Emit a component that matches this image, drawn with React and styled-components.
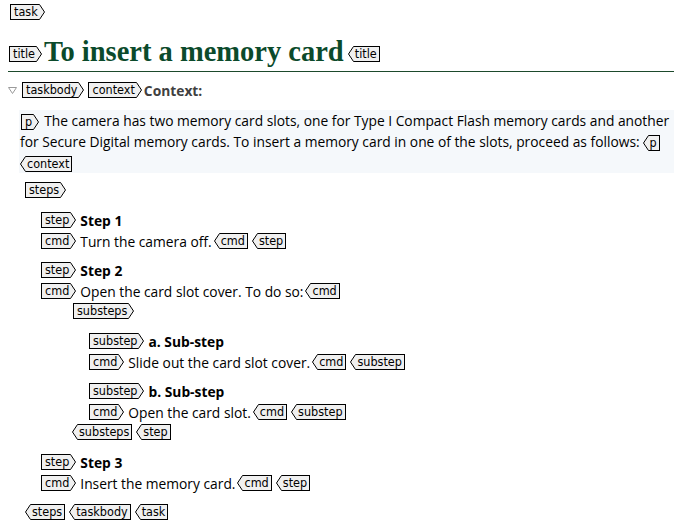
import React from "react";
import styled, { createGlobalStyle } from "styled-components";

const GlobalStyle = createGlobalStyle`
  html, body { margin: 0; padding: 0; background: #ffffff; }
  body { font-family: "Open Sans", "Noto Sans", sans-serif; color: #000; }
`;

const TAG_BG = "#f0f0f0";
const BODY_SIZE = "13.8px";

const TagWrap = styled.span`
  display: inline-flex;
  align-items: stretch;
  height: 16px;
  vertical-align: middle;
  flex: none;
  margin: ${(p) => p.$m || "0"};
`;

const TagLabel = styled.span`
  display: inline-block;
  box-sizing: border-box;
  height: 16px;
  background: ${TAG_BG};
  border: 1px solid #000;
  ${(p) => (p.$end ? "border-left: none;" : "border-right: none;")}
  padding: ${(p) => (p.$end ? "0 2px 0 1px" : "0 1px 0 3px")};
  font-family: "DejaVu Sans Condensed", "DejaVu Sans", sans-serif;
  font-stretch: condensed;
  font-size: 12.5px;
  line-height: 14px;
  color: #000;
  white-space: nowrap;
`;

const Arrow = ({ left }) => (
  <svg width="6" height="16" viewBox="0 0 6 16" style={{ display: "block" }}>
    {left ? (
      <path d="M6 0.5 H5.5 L0.5 8 L5.5 15.5 H6" fill={TAG_BG} stroke="#000" strokeWidth="1" />
    ) : (
      <path d="M0 0.5 H0.5 L5.5 8 L0.5 15.5 H0" fill={TAG_BG} stroke="#000" strokeWidth="1" />
    )}
  </svg>
);

const Tag = ({ end, children, m }) => (
  <TagWrap $m={m}>
    {end && <Arrow left />}
    <TagLabel $end={end}>{children}</TagLabel>
    {!end && <Arrow />}
  </TagWrap>
);

const Page = styled.div`
  padding: 2px 0 8px 8px;
`;

const Row = styled.div`
  display: flex;
  align-items: center;
  height: 20px;
  gap: ${(p) => p.$gap || "4px"};
  padding-left: ${(p) => p.$indent || "0"};
  margin-top: ${(p) => p.$mt || "0"};
  font-size: ${BODY_SIZE};
  white-space: nowrap;
`;

const TitleBlock = styled.div`
  display: flex;
  align-items: flex-end;
  gap: 2px;
  margin-top: 14px;
  padding-left: 1px;
  padding-bottom: 3px;
  border-bottom: 1px solid #1d4a2c;
`;

const TitleText = styled.h1`
  margin: 0;
  font-family: "Liberation Serif", "Times New Roman", serif;
  font-weight: 700;
  font-size: 28.5px;
  line-height: 32px;
  color: #0b4a2b;
`;

const TitleTagSlot = styled.span`
  display: inline-flex;
  margin-bottom: 6px;
  margin-left: ${(p) => p.$ml || "0"};
`;

const Toggle = styled.svg`
  display: block;
  flex: none;
`;

const ContextLabel = styled.span`
  font-weight: 700;
  font-size: ${BODY_SIZE};
  color: #404040;
  margin-left: -2px;
`;

const ContextBlock = styled.div`
  margin: 10px 0 0 11px;
  padding-left: 1px;
  background: #f5f8fb;
  font-size: ${BODY_SIZE};
  line-height: 21px;
`;

const Para = styled.p`
  margin: 0;
`;

const Block = styled.div`
  margin-top: ${(p) => p.$mt || "9px"};
  padding-left: ${(p) => p.$indent || "0"};
`;

const Heading = styled.span`
  font-weight: 700;
  font-size: ${BODY_SIZE};
`;

const Text = styled.span`
  font-size: ${BODY_SIZE};
  margin-right: -2px;
`;

export default function App() {
  return (
    <>
      <GlobalStyle />
      <Page>
        <Row $indent="2px">
          <Tag>task</Tag>
        </Row>

        <TitleBlock>
          <TitleTagSlot>
            <Tag>title</Tag>
          </TitleTagSlot>
          <TitleText>To insert a memory card</TitleText>
          <TitleTagSlot $ml="2px">
            <Tag end>title</Tag>
          </TitleTagSlot>
        </TitleBlock>

        <Row $mt="8px" $gap="4px">
          <Toggle width="9" height="7" viewBox="0 0 9 7">
            <path d="M0.5 0.5 H8.5 L4.5 6.5 Z" fill="none" stroke="#9a9a9a" strokeWidth="1" />
          </Toggle>
          <Tag m="0 0 0 1px">taskbody</Tag>
          <Tag>context</Tag>
          <ContextLabel>Context:</ContextLabel>
        </Row>

        <ContextBlock>
          <Para>
            <Tag m="0 5px 0 1px">p</Tag>
            The camera has two memory card slots, one for Type I Compact Flash memory cards and another for
            Secure Digital memory cards. To insert a memory card in one of the slots, proceed as follows:
            <Tag end m="0 0 0 3px">p</Tag>
          </Para>
          <Tag end>context</Tag>
        </ContextBlock>

        <Row $mt="7px" $indent="17px">
          <Tag>steps</Tag>
        </Row>

        <Block $indent="33px" $mt="0">
          <Block $mt="10px">
            <Row>
              <Tag>step</Tag>
              <Heading>Step 1</Heading>
            </Row>
            <Row $mt="1px">
              <Tag>cmd</Tag>
              <Text>Turn the camera off.</Text>
              <Tag end>cmd</Tag>
              <Tag end>step</Tag>
            </Row>
          </Block>

          <Block>
            <Row>
              <Tag>step</Tag>
              <Heading>Step 2</Heading>
            </Row>
            <Row $mt="1px">
              <Tag>cmd</Tag>
              <Text>Open the card slot cover. To do so:</Text>
              <Tag end>cmd</Tag>
            </Row>
            <Row $indent="32px">
              <Tag>substeps</Tag>
            </Row>
            <Block $indent="48px" $mt="10px">
              <Row>
                <Tag>substep</Tag>
                <Heading>a. Sub-step</Heading>
              </Row>
              <Row $mt="1px">
                <Tag>cmd</Tag>
                <Text>Slide out the card slot cover.</Text>
                <Tag end>cmd</Tag>
                <Tag end>substep</Tag>
              </Row>
            </Block>
            <Block $indent="48px">
              <Row>
                <Tag>substep</Tag>
                <Heading>b. Sub-step</Heading>
              </Row>
              <Row $mt="1px">
                <Tag>cmd</Tag>
                <Text>Open the card slot.</Text>
                <Tag end>cmd</Tag>
                <Tag end>substep</Tag>
              </Row>
            </Block>
            <Row $indent="31px">
              <Tag end>substeps</Tag>
              <Tag end>step</Tag>
            </Row>
          </Block>

          <Block $mt="10px">
            <Row>
              <Tag>step</Tag>
              <Heading>Step 3</Heading>
            </Row>
            <Row $mt="1px">
              <Tag>cmd</Tag>
              <Text>Insert the memory card.</Text>
              <Tag end>cmd</Tag>
              <Tag end>step</Tag>
            </Row>
          </Block>
        </Block>

        <Row $mt="9px" $indent="17px">
          <Tag end>steps</Tag>
          <Tag end>taskbody</Tag>
          <Tag end>task</Tag>
        </Row>
      </Page>
    </>
  );
}
